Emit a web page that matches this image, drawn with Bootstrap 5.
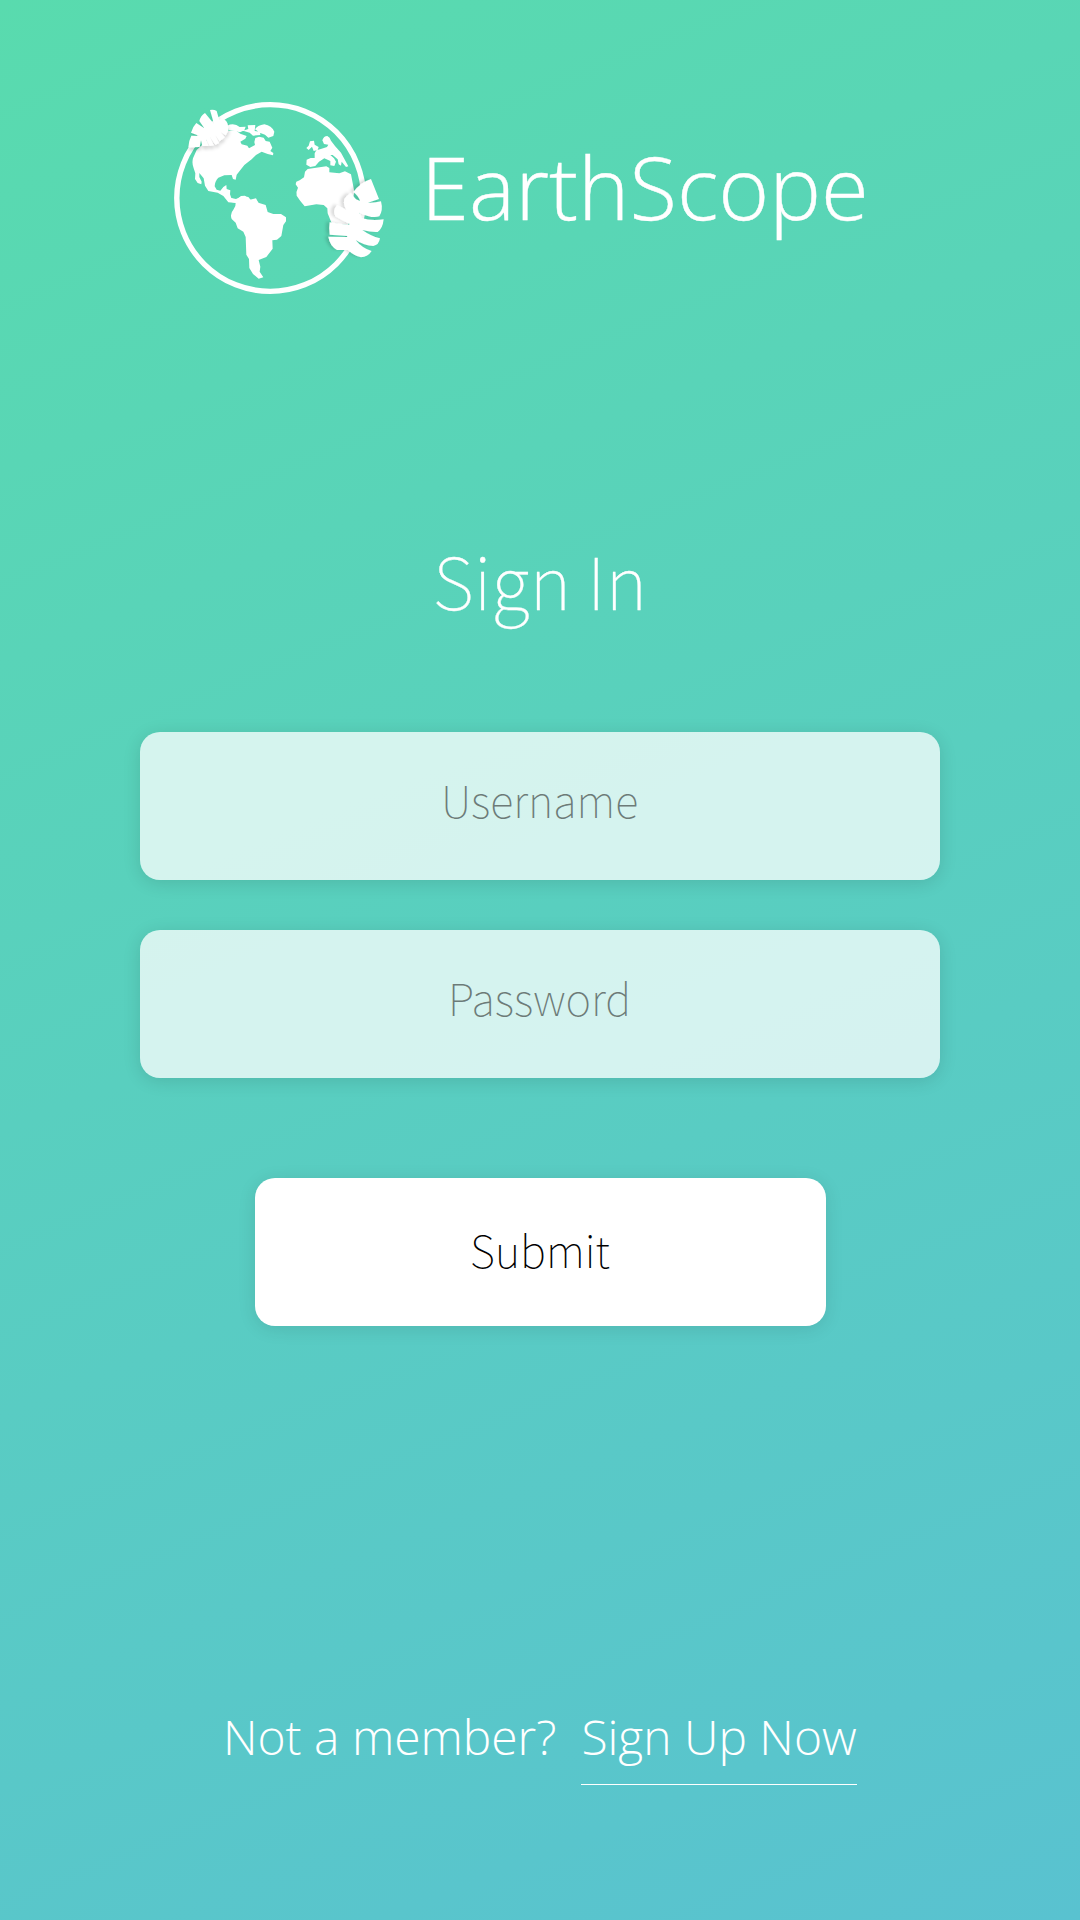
<!DOCTYPE html>
<html lang="en">
<head>
<meta charset="utf-8">
<meta name="viewport" content="width=device-width, initial-scale=1">
<title>EarthScope – Sign In</title>
<link href="https://cdn.jsdelivr.net/npm/bootstrap@5.3.0/dist/css/bootstrap.min.css" rel="stylesheet">
<style>
  body { height: 1920px; overflow: hidden; background: linear-gradient(158deg, #59dbae 0%, #59cfbf 48%, #59c2d0 100%); color: #fff; font-family: "Open Sans", sans-serif; }
  .thin { font-family: "Noto Sans CJK SC", "Noto Sans CJK JP", sans-serif; font-weight: 100; }
  .brand-bar { padding: 98px 0 0 171px; height: 300px; }
  .globe { width: 218px; height: 200px; flex: none; }
  .wordmark { font-size: 87px; font-weight: 300; line-height: 1; margin: 45px 0 0 32px; white-space: nowrap; -webkit-text-stroke: .4px #fff; }
  .heading { font-size: 72px; line-height: 96px; margin-top: 231px; -webkit-text-stroke: .3px #fff; }
  .sign-form { margin-top: 105px; gap: 50px; }
  .field { width: 800px; height: 148px; border: 0; border-radius: 20px; background: rgba(255,255,255,.75); box-shadow: 0 3px 18px rgba(0,0,0,.12); background-clip: padding-box; font-size: 43.5px; padding: 0 1px 13px 0; color: #333; }
  .field:focus { background: rgba(255,255,255,.85); }
  .field::placeholder { color: #6d7b78; opacity: 1; }
  .send { width: 571px; height: 148px; border-radius: 20px; margin-top: 50px; font-size: 43.6px; color: #000; background: #fff; box-shadow: 0 3px 18px rgba(0,0,0,.1); padding: 0 0 4px; }
  .join { font-size: 47.9px; font-weight: 300; line-height: 66px; margin-top: 378px; padding-left: 223px; white-space: nowrap; }
  .join a { margin-left: 25px; height: 81px; border-bottom: 1px solid #fff; }
</style>
</head>
<body class="d-flex flex-column">
  <header class="brand-bar d-flex align-items-start">
    <svg class="globe" viewBox="171 98 218 200" fill="#fff" role="img" aria-label="EarthScope globe">
      <defs>
        <filter id="sh" x="-30%" y="-30%" width="160%" height="160%"><feDropShadow dx="-10" dy="-2" stdDeviation="5" flood-color="#000" flood-opacity=".14"/></filter>
        <filter id="sh2" x="-30%" y="-30%" width="160%" height="160%"><feDropShadow dx="2" dy="10" stdDeviation="5" flood-color="#000" flood-opacity=".15"/></filter>
      </defs>
      <circle cx="270.2" cy="198" r="93.4" fill="none" stroke="#fff" stroke-width="5.4"/>
      <g transform="translate(165 95) scale(.33333)" stroke-linejoin="round">
        <!-- North and Central America -->
        <path d="M95 165L84 190Q80 205 86 220L91 235L90 252L98 264L109 268L110 260L103 246L103 234L116 250L120 272L130 288L158 293L175 303L190 322L214 324L235 328L285 329L276 318L258 316L250 306L233 303L213 312L199 309L195 298L196 286L185 282L184 270L175 276L166 287L155 284L149 274Q150 258 160 248L178 241L200 240L204 252L212 254L215 239L238 210L260 193L273 180L290 170L308 177L324 181L325 174L316 168L322 158L314 140L302 138L296 128L282 125L271 129L268 141L270 150L252 160L247 152L230 148L226 140L241 131L245 123L226 116L212 106L188 108L170 95Z"/>
        <path d="M186 92Q208 82 224 96L242 95L238 106L225 112L210 108L192 106ZM248 91L271 90L269 108L285 110L286 120L264 122L254 113L234 107L250 102ZM270 103Q277 91 298 88Q320 92 328 110L325 123L310 128L300 119L286 114Z"/>
        <!-- South America -->
        <path transform="translate(0 285)" d="M190 22L214 30L228 18L240 17L255 29L273 25L280 38L302 45L308 66L325 72L348 72L363 82L363 94L355 105L349 138L336 149L322 151L323 176L304 201L281 210L286 230L284 245L295 262L281 266L264 252L253 234L252 207L244 194L242 141L235 125L218 115L212 98L200 87Q194 71 205 59L211 48L212 38L195 35Z"/>
        <!-- Africa -->
        <path d="M420 230L428 222L484 214L493 219L493 232L523 235L540 229L558 238L568 290L550 390L500 385L488 355L487 340L476 330L454 328L419 334L406 318L395 302Q392 291 399 278L392 268L394 260L404 256L417 247Z"/>
        <!-- Europe -->
        <path d="M472 136Q476 123 487 123Q495 126 498 137L510 153L528 173L550 214L543 216L530 200L528 212L521 208L518 193L503 180L496 180L507 190L513 200L508 213L496 211L496 198L478 190L462 200L451 213L436 216L424 209L425 194L437 189L449 189L449 175L454 166L470 161L486 156L490 149L477 147Z"/>
        <path d="M435 139L447 137L449 149L461 156L458 165L446 168L441 155L431 165L424 159L431 152Z"/>
        <!-- large leaf -->
        <g transform="translate(315 285)" filter="url(#sh)">
          <path d="M303 -33L327 27L294 38Q315 39 333 34Q340 61 328 79Q307 87 268 68L275 84Q302 93 341 88Q338 116 323 126Q303 127 277 120Q302 138 330 145Q327 165 310 168Q282 167 256 149Q276 174 305 183Q294 200 273 202Q251 197 234 180L201 180Q179 167 175 140L231 141L232 138L179 134Q176 115 179 97L236 105L239 102Q215 91 196 79Q187 61 202 45L229 60Q219 42 223 28Q232 15 242 10L258 28L270 33Q266 18 250 6Q272 -23 303 -33Z"/>
        </g>
        <!-- small leaf -->
        <g filter="url(#sh2)">
          <path d="M70 157Q71 137 79 122L104 123L78 113Q83 95 94 84L118 100L103 78Q107 62 120 54L147 87L135 45Q147 43 155 48L163 76Q178 65 188 86L191 105L182 121L167 112L179 127L164 139L151 121L162 144L151 149L135 126L146 151L134 153L123 133L131 153L112 153L108 136L104 156Z"/>
        </g>
      </g>
    </svg>
    <div class="wordmark">EarthScope</div>
  </header>
  <main class="d-flex flex-column align-items-center">
    <h1 class="heading thin mb-0">Sign In</h1>
    <form class="sign-form d-flex flex-column align-items-center" onsubmit="return false">
      <input class="field thin form-control text-center" type="text" placeholder="Username" aria-label="Username">
      <input class="field thin form-control text-center" type="password" placeholder="Password" aria-label="Password">
      <button class="send thin btn" type="submit">Submit</button>
    </form>
  </main>
  <footer class="join d-flex align-items-start">
    <span>Not a member?</span>
    <a class="text-white text-decoration-none" href="#">Sign Up Now</a>
  </footer>
<script src="https://cdn.jsdelivr.net/npm/bootstrap@5.3.0/dist/js/bootstrap.bundle.min.js"></script>
</body>
</html>
